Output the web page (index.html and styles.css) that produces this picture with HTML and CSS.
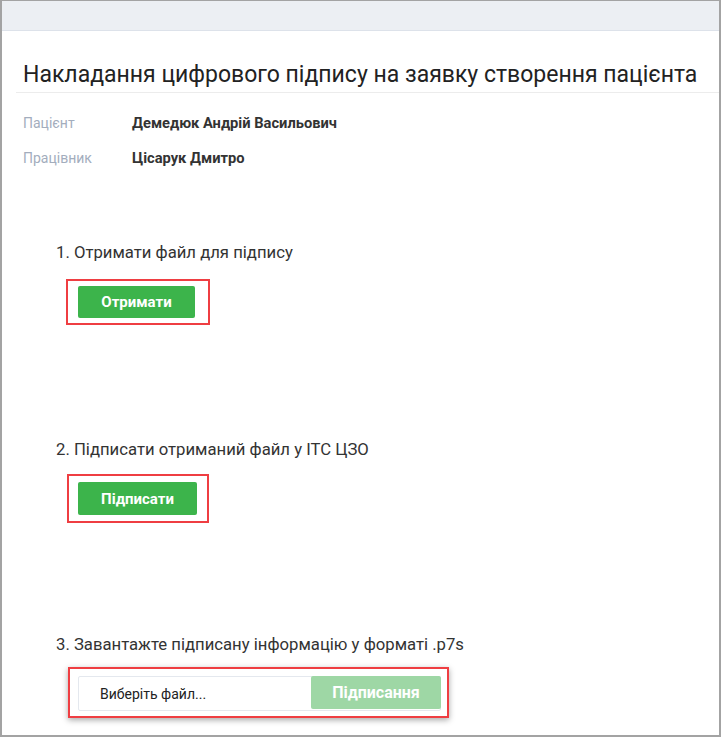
FILE: index.html
```html
<html>
<head>
	<meta charset="UTF-8">
	<title>Підпис</title>
	<link rel="stylesheet" href="styles.css">
</head>
<body>
	<div class="frame">
		<div class="topbar"></div>
		<div class="content">
			<h1 class="title">Накладання цифрового підпису на заявку створення пацієнта</h1>
			<div class="info">
				<div class="row">
					<span class="label">Пацієнт</span>
					<span class="value">Демедюк Андрій Васильович</span>
				</div>
				<div class="row">
					<span class="label">Працівник</span>
					<span class="value">Цісарук Дмитро</span>
				</div>
			</div>

			<div class="step step-1">
				<p class="step-text">1. Отримати файл для підпису</p>
				<div class="mark">
					<button type="button" class="btn">Отримати</button>
				</div>
			</div>

			<div class="step step-2">
				<p class="step-text">2. Підписати отриманий файл у ІТС ЦЗО</p>
				<div class="mark">
					<button type="button" class="btn">Підписати</button>
				</div>
			</div>

			<div class="step step-3">
				<p class="step-text">3. Завантажте підписану інформацію у форматі .p7s</p>
				<div class="mark mark-wide">
					<div class="upload">
						<span class="file">Виберіть файл...</span>
						<button type="button" class="btn btn-off">Підписання</button>
					</div>
				</div>
			</div>
		</div>
	</div>
</body>
</html>
```

FILE: styles.css
```css
body {
	margin: 0;
	font-family: Roboto, "Noto Sans", sans-serif;
	color: #333;
	background: #fff;
}
.frame {
	box-sizing: border-box;
	width: 721px;
	height: 737px;
	border: 2px solid #a3a3a3;
	border-top-width: 1px;
	overflow: hidden;
}
.topbar {
	height: 29px;
	background: #eceff3;
	border-bottom: 1px solid #dde2ea;
}
.content {
	padding: 0 0 0 14px;
}
.title {
	margin: 30px 0 0;
	padding: 0 0 4px 7px;
	font-size: 23px;
	line-height: 27px;
	font-weight: 400;
	color: #222;
	border-bottom: 1px solid #ececec;
	white-space: nowrap;
}
.info {
	padding: 12px 0 0 7px;
}
.row {
	display: flex;
	height: 35px;
	align-items: center;
	font-size: 14px;
}
.label {
	width: 109px;
	color: #a3adbd;
}
.value {
	font-size: 14.7px;
	font-weight: 700;
	color: #333;
}
.step-text {
	margin: 0;
	padding-left: 40px;
	font-size: 16.7px;
	line-height: 20px;
	color: #333;
}
.step-1 {
	margin-top: 68px;
}
.step-2 {
	margin-top: 115px;
}
.step-3 {
	margin-top: 112px;
}
.mark {
	display: inline-block;
	margin: 16px 0 0 50px;
	padding: 5px 13px 5px 10px;
	border: 2px solid #ef3e42;
}
.step-2 .mark {
	margin: 14px 0 0 51px;
	padding: 6px 10px 6px 9px;
}
.btn {
	display: block;
	width: 117px;
	height: 32px;
	border: 0;
	border-radius: 2px;
	background: #3cb44b;
	color: #fff;
	font-family: Roboto, "Noto Sans", sans-serif;
	font-size: 15px;
	font-weight: 700;
}
.step-2 .btn {
	width: 119px;
	height: 33px;
}
.mark-wide {
	margin: 12px 0 0 52px;
	padding: 7px 6px 5px 8px;
	box-shadow: 0 2px 6px rgba(0, 0, 0, 0.35);
}
.upload {
	display: flex;
	width: 361px;
	height: 33px;
	border: 1px solid #e4e8ee;
	border-radius: 2px;
}
.file {
	flex: 1;
	display: flex;
	align-items: center;
	padding-left: 21px;
	font-size: 14px;
	color: #222;
}
.btn-off {
	width: 130px;
	height: 33px;
	margin: -1px -1px 0 0;
	background: #9ed7a5;
	font-size: 16px;
}
```
